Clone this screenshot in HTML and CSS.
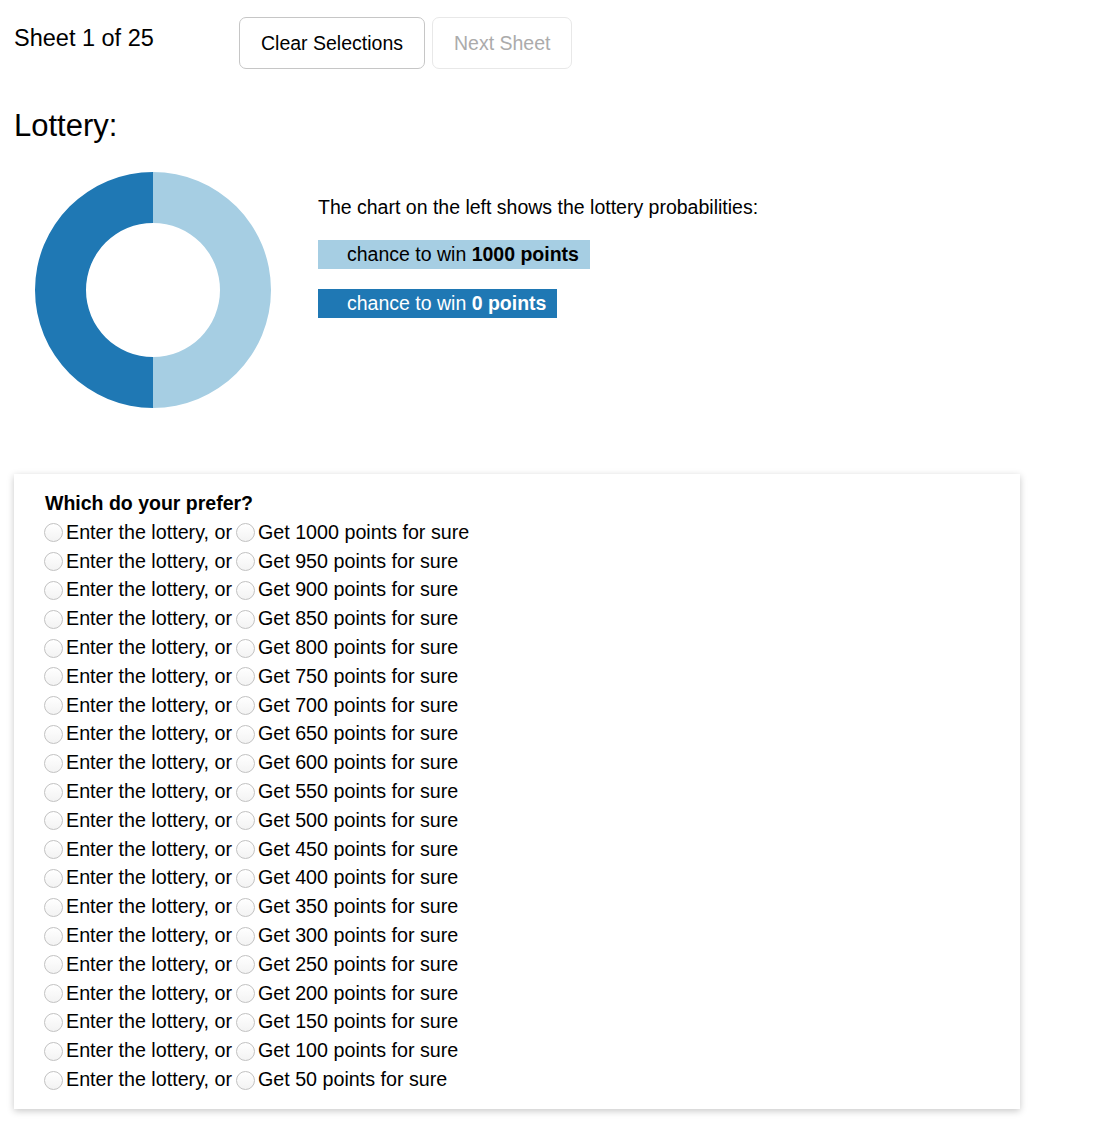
FILE: index.html
```html
<!DOCTYPE html>
<html>
<head>
<meta charset="utf-8">
<link rel="stylesheet" href="styles.css">
</head>
<body>
<div class="page">
  <div class="topbar">
    <div class="sheet-label">Sheet 1 of 25</div>
    <button class="btn">Clear Selections</button>
    <button class="btn btn-disabled" disabled>Next Sheet</button>
  </div>
  <h2 class="title">Lottery:</h2>
  <div class="lottery">
    <svg class="donut" width="236" height="236" viewBox="0 0 236 236">
      <path d="M118 0 A118 118 0 0 1 118 236 L118 185 A67 67 0 0 0 118 51 Z" fill="#a6cee3"/>
      <path d="M118 236 A118 118 0 0 1 118 0 L118 51 A67 67 0 0 0 118 185 Z" fill="#1f78b4"/>
    </svg>
    <div class="legend">
      <p class="legend-intro">The chart on the left shows the lottery probabilities:</p>
      <div class="legend-item legend-light">chance to win <b>1000 points</b></div>
      <div class="legend-item legend-dark">chance to win <b>0 points</b></div>
    </div>
  </div>
  <div class="card">
    <div class="question">Which do your prefer?</div>
    <div class="rows" id="rows"></div>
  </div>
</div>
<script src="script.js"></script>
</body>
</html>
```
FILE: script.js
```js
var rows = document.getElementById('rows');
for (var i = 0; i < 20; i++) {
  var pts = 1000 - i * 50;
  var row = document.createElement('div');
  row.className = 'row';
  row.innerHTML = '<label class="opt"><input type="radio" class="radio" name="q' + i + '">Enter the lottery, or</label>' +
    '<label class="opt"><input type="radio" class="radio radio-second" name="q' + i + '">Get ' + pts + ' points for sure</label>';
  rows.appendChild(row);
}
```
FILE: styles.css
```css
html, body {
  margin: 0;
  padding: 0;
  background: #fff;
}
body {
  font-family: "Liberation Sans", Arial, sans-serif;
  color: #000;
  font-size: 19.5px;
}
.page {
  padding: 17px 0 15px 14px;
  width: 1006px;
}
.topbar {
  display: flex;
  align-items: flex-start;
  gap: 7px;
}
.sheet-label {
  width: 218px;
  font-size: 23.5px;
  line-height: 27px;
  margin-top: 8px;
}
.btn {
  height: 52px;
  padding: 0 21px;
  font-family: "Liberation Sans", Arial, sans-serif;
  font-size: 19.5px;
  color: #000;
  background: #fff;
  border: 1px solid #c6c6c6;
  border-radius: 7px;
}
.btn-disabled {
  color: #ababab;
  border-color: #e8e8e8;
}
.title {
  margin: 39px 0 0 0;
  font-size: 31px;
  font-weight: normal;
  line-height: 36px;
}
.lottery {
  display: flex;
  align-items: flex-start;
  margin-top: 28px;
}
.donut {
  display: block;
  margin-left: 21px;
}
.legend {
  margin-left: 47px;
  padding-top: 24px;
}
.legend-intro {
  margin: 0 0 22px 0;
  line-height: 22px;
}
.legend-item {
  display: table;
  height: 29px;
  line-height: 29px;
  padding: 0 11px 0 29px;
  margin-bottom: 20px;
}
.legend-light {
  background: #a6cee3;
  color: #000;
}
.legend-dark {
  background: #1f78b4;
  color: #fff;
}
.card {
  margin-top: 66px;
  background: #fff;
  box-shadow: 0 2px 7px rgba(0, 0, 0, 0.22);
  padding: 15px 0 15px 30px;
  font-size: 19.7px;
}
.question {
  font-weight: bold;
  font-size: 19.5px;
  line-height: 29px;
  padding-left: 1px;
}
.row {
  display: flex;
  align-items: center;
  height: 28.8px;
}
.opt {
  display: flex;
  align-items: center;
}
.radio {
  -webkit-appearance: none;
  appearance: none;
  width: 19px;
  height: 19px;
  margin: 1px 3px 0 0;
  border-radius: 50%;
  border: 1px solid #c2c2c2;
  background: linear-gradient(#ffffff, #f3f3f3);
  box-sizing: border-box;
}
.radio-second {
  margin-left: 4px;
}
```
